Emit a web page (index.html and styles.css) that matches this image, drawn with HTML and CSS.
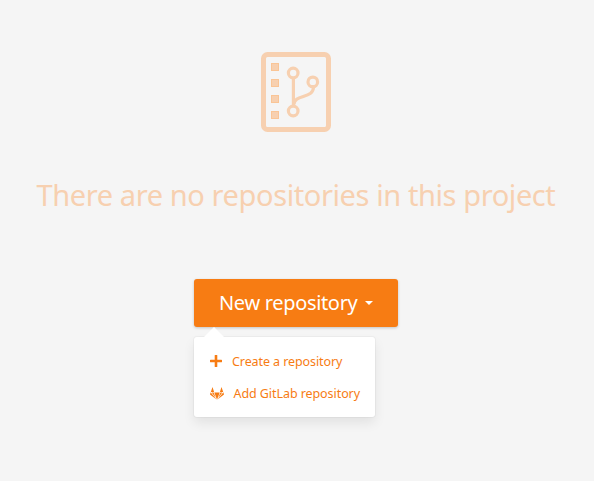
FILE: index.html
```
<!DOCTYPE html>
<html lang="en">
<head>
<meta charset="utf-8">
<title>Repositories</title>
<link rel="stylesheet" href="styles.css">
</head>
<body>
<main class="empty">
  <svg class="empty-icon" width="70" height="80" viewBox="0 0 70 80" fill="none" stroke="#f7d0b0">
    <rect x="2.5" y="2.5" width="65" height="75" rx="4" stroke-width="5"/>
    <g fill="#f7d0b0" stroke="#fac596" stroke-width="1">
      <rect x="10.500" y="11.5" width="7" height="7"/>
      <rect x="10.500" y="27.5" width="7" height="7"/>
      <rect x="10.500" y="43.5" width="7" height="7"/>
      <rect x="10.500" y="59.5" width="7" height="7"/>
    </g>
    <g stroke-width="3.200">
      <circle cx="32.2" cy="21" r="4.8"/>
      <circle cx="51.8" cy="29.9" r="4.8"/>
      <circle cx="32.2" cy="59" r="4.8"/>
      <path d="M32.4 26v28M33 52.500c0-10.500 19.500-5.500 19.500-17.500"/>
    </g>
  </svg>
  <h1 class="empty-title">There are no repositories in this project</h1>
  <div class="dropdown">
    <button class="button" type="button"><span class="button-label">New repository</span><span class="caret"></span></button>
    <div class="menu">
      <a class="item">
        <svg class="plus" width="12" height="12" viewBox="0 0 12 12"><path d="M6 .8v10.400M.8 6h10.400" stroke="#f77c13" stroke-width="2.600" stroke-linecap="round"/></svg>
        <span class="create-label">Create a repository</span>
      </a>
      <a class="item">
        <svg class="gitlab" width="14" height="13" viewBox="0 0 14 13" fill="#f77c13"><path d="M2.500 0 .8 5h3.300zM11.500 0 9.900 5h3.300zM4.300 5.500h5.400L7 12.800zM.6 5.300 0 7.600l6.500 5zM13.400 5.300l.6 2.300-6.500 5zM1.700 5.500h1.900l2.200 5.600zM12.300 5.500h-1.900l-2.200 5.600z"/></svg>
        <span class="add-label">Add GitLab repository</span>
      </a>
    </div>
  </div>
</main>
</body>
</html>
```
FILE: styles.css
```
* { box-sizing: border-box; }
body {
  margin: 0;
  height: 481px;
  background: #f5f5f5;
  color: #f77c13;
  font-family: "Noto Sans", sans-serif;
}
.empty { display: flex; flex-direction: column; align-items: center; padding: 52px 2px 0 0; }
.empty-icon { display: block; }
.empty-title {
  margin: 42px 0 0;
  height: 105px;
  line-height: 42px;
  font-size: 29px;
  font-weight: 400;
  letter-spacing: -.4px;
  white-space: nowrap;
  color: #f7d0b0;
}
.dropdown { position: relative; width: 204px; }
.button {
  display: flex;
  align-items: center;
  width: 204px;
  height: 48px;
  padding: 0 25px;
  border: 0;
  border-radius: 3px;
  background: #f77c13;
  box-shadow: 0 1px 3px rgba(0, 0, 0, .2);
  color: #fff;
  font: 20px "Noto Sans", sans-serif;
  white-space: nowrap;
}
.button-label { width: 146px; padding-bottom: 2px; text-align: left; letter-spacing: -.33px; }
.caret { border: 4px solid transparent; border-top-color: #fff; border-bottom: 0; }
.menu {
  position: absolute;
  top: 58px;
  left: 0;
  width: 181px;
  height: 80px;
  padding: 8px 0 8px 16px;
  border-radius: 3px;
  background: #fff;
  box-shadow: 0 0 0 1px rgba(0, 0, 0, .03), 0 6px 12px rgba(0, 0, 0, .08);
}
.menu::before {
  content: "";
  position: absolute;
  top: -10px;
  left: 10px;
  border: 10px solid transparent;
  border-top: 0;
  border-bottom-color: #fff;
}
.item {
  display: flex;
  align-items: center;
  height: 32px;
  font-size: 12.5px;
  white-space: nowrap;
}
.plus, .gitlab { flex: none; }
.plus { margin-right: 10px; }
.gitlab { margin: 0 9.500px 0 0; }
.create-label { letter-spacing: -.09px; }
.add-label { letter-spacing: -.07px; }
```
